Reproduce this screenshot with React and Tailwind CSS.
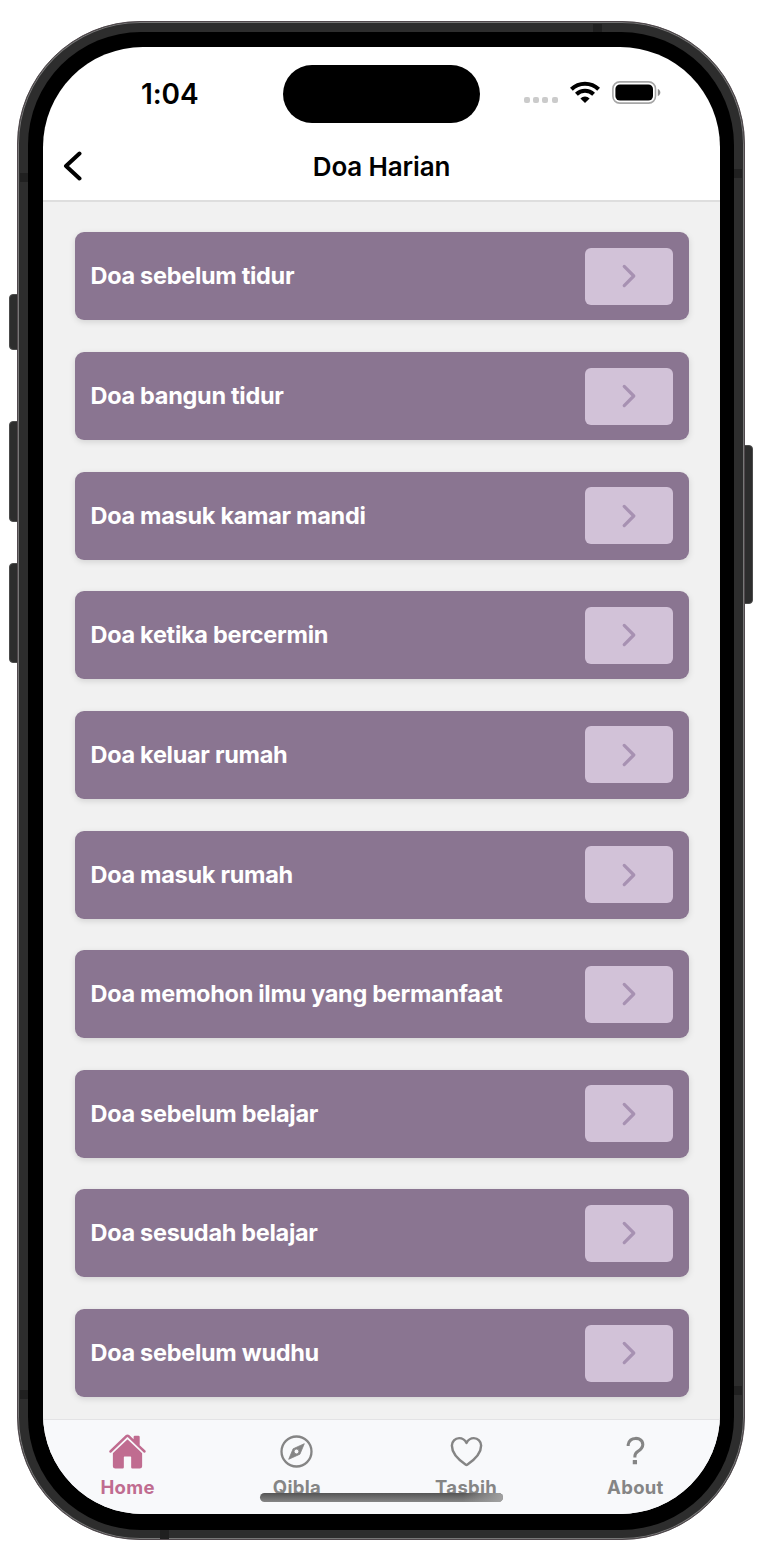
import React from "react";
import {
  IoHome,
  IoHeartOutline,
  IoHelpSharp,
  IoChevronForward,
} from "react-icons/io5";

const prayers = [
  "Doa sebelum tidur",
  "Doa bangun tidur",
  "Doa masuk kamar mandi",
  "Doa ketika bercermin",
  "Doa keluar rumah",
  "Doa masuk rumah",
  "Doa memohon ilmu yang bermanfaat",
  "Doa sebelum belajar",
  "Doa sesudah belajar",
  "Doa sebelum wudhu",
];

function Compass({ className }) {
  return (
    <svg className={className} viewBox="0 0 39 39">
      <circle cx="19.5" cy="19.5" r="15" fill="none" stroke="currentColor" strokeWidth="2.3" />
      <path
        fillRule="evenodd"
        fill="currentColor"
        stroke="currentColor"
        strokeWidth="0.8"
        strokeLinejoin="round"
        d="M27.3 11.7 L22.9 22.2 L11.7 27.3 L16.1 16.8 Z M19.5 17.1 A2.4 2.4 0 1 0 19.5 21.9 A2.4 2.4 0 1 0 19.5 17.1 Z"
      />
    </svg>
  );
}

const tabs = [
  { label: "Home", Icon: IoHome, color: "text-[#c06c90]" },
  { label: "Qibla", Icon: Compass, color: "text-[#858585]" },
  { label: "Tasbih", Icon: IoHeartOutline, color: "text-[#858585]" },
  { label: "About", Icon: IoHelpSharp, color: "text-[#858585]" },
];

function StatusBar() {
  return (
    <div className="relative h-[88px] shrink-0">
      <div className="absolute left-[98px] top-[29.5px] text-[28px] leading-[34px] font-semibold tracking-[-0.1px] text-black">
        1:04
      </div>
      <div className="absolute left-[240px] top-[18px] h-[58px] w-[197px] rounded-full bg-black" />
      <div className="absolute left-[480.5px] top-[50px] flex gap-[3.4px]">
        <span className="size-[6px] rounded-[2px] bg-[#cbcbcb]" />
        <span className="size-[6px] rounded-[2px] bg-[#cbcbcb]" />
        <span className="size-[6px] rounded-[2px] bg-[#cbcbcb]" />
        <span className="size-[6px] rounded-[2px] bg-[#cbcbcb]" />
      </div>
      <svg className="absolute left-[527px] top-[34px]" width="30" height="22" viewBox="0 0 30 22">
        <g fill="none" stroke="#000" strokeWidth="4">
          <path d="M1.4 8.2 A19.4 19.4 0 0 1 28.6 8.2" />
          <path d="M6.4 13.2 A12.3 12.3 0 0 1 23.6 13.2" />
        </g>
        <path d="M15 22 L10.4 17.4 A6.6 6.6 0 0 1 19.6 17.4 Z" fill="#000" />
      </svg>
      <svg className="absolute left-[569px] top-[34px]" width="50" height="23" viewBox="0 0 50 23">
        <rect x="0.9" y="0.9" width="42.6" height="21.2" rx="6.8" fill="none" stroke="#a6a6a6" strokeWidth="1.6" />
        <rect x="3.4" y="3.4" width="37.6" height="16.2" rx="4.6" fill="#000" />
        <path d="M45.8 8 C49.2 9.2 49.2 13.8 45.8 15 Z" fill="#8c8c8c" />
      </svg>
    </div>
  );
}

function Header() {
  return (
    <div className="relative flex h-[67px] shrink-0 items-center justify-center border-b-2 border-[#dedede]">
      <svg className="absolute left-[19px] top-[15px]" width="20" height="32" viewBox="0 0 20 32">
        <path d="M17.5 3.5 L4 16 L17.5 28.5" fill="none" stroke="#000" strokeWidth="4" strokeLinecap="round" strokeLinejoin="round" />
      </svg>
      <h1 className="pb-px text-[26px] leading-[32px] font-semibold tracking-[-0.15px] text-black">Doa Harian</h1>
    </div>
  );
}

function PrayerRow({ title }) {
  return (
    <div className="flex h-[88px] shrink-0 items-center justify-between rounded-[9px] bg-[#8a7591] pr-[15.5px] pl-[16px] shadow-[0_2px_6px_rgba(0,0,0,0.13)]">
      <span className="text-[23.5px] leading-[30px] font-bold tracking-[-0.3px] text-white">{title}</span>
      <button className="flex h-[57px] w-[88px] items-center justify-center rounded-[6px] bg-[#d2c2d8]">
        <IoChevronForward className="size-[34px] text-[#a791b2]" />
      </button>
    </div>
  );
}

function TabBar() {
  return (
    <div className="relative flex h-[95px] shrink-0 border-t border-[#e3e3e5] bg-[#f8f9fb]">
      {tabs.map(({ label, Icon, color }) => (
        <div key={label} className={`flex flex-1 flex-col items-center pt-[12px] ${color}`}>
          <Icon className="size-[39px]" />
          <span className="mt-[5px] text-[18.5px] leading-[22px] font-bold tracking-[0.3px]">{label}</span>
        </div>
      ))}
      <div className="absolute left-[217px] top-[73px] h-[9px] w-[243px] overflow-hidden rounded-full bg-linear-to-b from-[#555] to-[#868686]">
        <div className="ml-auto h-full w-[40px] bg-linear-to-r from-transparent to-[#a2a2a2]" />
      </div>
    </div>
  );
}

export default function App() {
  return (
    <div className="h-[1568px] w-[770px] bg-white pt-[21px] pl-[17px] font-['Inter',sans-serif]">
      <div className="relative h-[1519px] w-[728px]">
        <div className="absolute -left-[8px] top-[273px] h-[56px] w-[14px] rounded-[4px] border border-[#4c4c4c] bg-[#2d2d2d]" />
        <div className="absolute -left-[8px] top-[400px] h-[101px] w-[14px] rounded-[4px] border border-[#4c4c4c] bg-[#2d2d2d]" />
        <div className="absolute -left-[8px] top-[542px] h-[100px] w-[14px] rounded-[4px] border border-[#4c4c4c] bg-[#2d2d2d]" />
        <div className="absolute -right-[8px] top-[424px] h-[159px] w-[14px] rounded-[4px] border border-[#4c4c4c] bg-[#2d2d2d]" />
        <div className="relative h-full overflow-hidden rounded-[123px] border border-[#50484c] bg-[#2d2d2d] p-px ring-1 ring-[#777] ring-inset">
          <div className="absolute top-[2px] left-[575px] h-[12px] w-[9px] bg-[#202020]" />
          <div className="absolute bottom-0 left-[142px] h-[12px] w-[9px] bg-[#202020]" />
          <div className="absolute top-[151px] left-[2px] h-[9px] w-[12px] bg-[#202020]" />
          <div className="absolute top-[147px] right-[2px] h-[9px] w-[12px] bg-[#202020]" />
          <div className="absolute top-[1368px] left-[2px] h-[9px] w-[12px] bg-[#202020]" />
          <div className="absolute top-[1364px] right-[2px] h-[9px] w-[12px] bg-[#202020]" />
          <div className="relative mt-[9px] ml-[9px] h-[1498px] w-[706px] rounded-[113px] bg-black pt-[15px] pl-[15px]">
            <div className="flex h-[1467px] w-[677px] flex-col overflow-hidden rounded-[100px] bg-white">
              <StatusBar />
              <Header />
              <main className="flex h-[1217px] shrink-0 flex-col gap-[31.63px] bg-[#f1f1f1] px-[31.5px] pt-[30.4px]">
                {prayers.map((title) => (
                  <PrayerRow key={title} title={title} />
                ))}
              </main>
              <TabBar />
            </div>
          </div>
        </div>
      </div>
    </div>
  );
}
